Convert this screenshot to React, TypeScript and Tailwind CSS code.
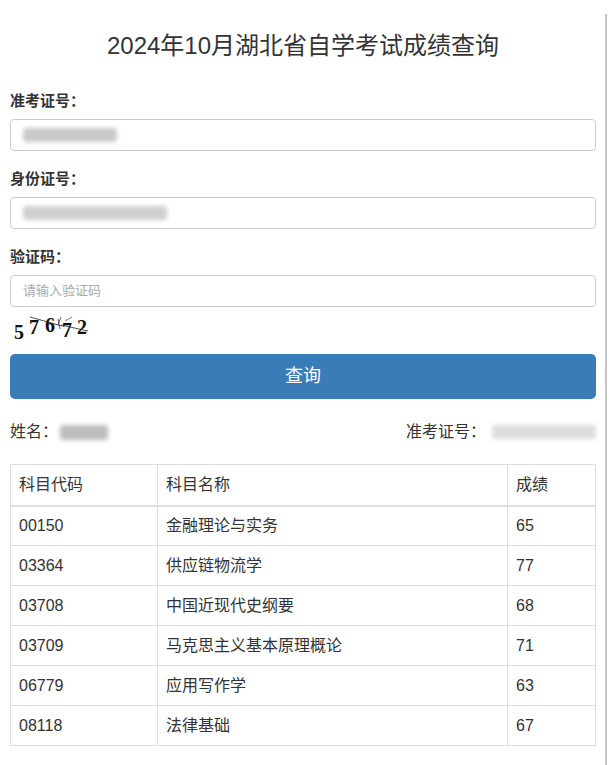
import React from "react";

const font = {
  fontFamily: '"Liberation Sans", "Noto Sans CJK SC", sans-serif',
};

const scores = [
  { code: "00150", name: "金融理论与实务", score: "65" },
  { code: "03364", name: "供应链物流学", score: "77" },
  { code: "03708", name: "中国近现代史纲要", score: "68" },
  { code: "03709", name: "马克思主义基本原理概论", score: "71" },
  { code: "06779", name: "应用写作学", score: "63" },
  { code: "08118", name: "法律基础", score: "67" },
];

// Blurred-out personal data
const Blur = ({ className }: { className: string }) => (
  <div className={`rounded-sm blur-[2px] ${className}`} />
);

const Captcha = () => (
  <svg width="82" height="30" viewBox="0 0 82 30" className="block">
    <g
      fontFamily='"Liberation Serif", serif'
      fontWeight="bold"
      fontSize="20"
      fill="#111"
    >
      <text x="1" y="25">5</text>
      <text x="16" y="20">7</text>
      <text x="32" y="18">6</text>
      <text x="49" y="23">7</text>
      <text x="64" y="20">2</text>
    </g>
    <path d="M17 3 L49 12" stroke="#222" strokeWidth="0.8" fill="none" />
    <path d="M45 5 L47 15 M48 3 L45 11" stroke="#222" strokeWidth="0.7" fill="none" />
    <path d="M52 7 L59 3" stroke="#444" strokeWidth="0.7" fill="none" />
    <path d="M48 11 L75 17" stroke="#222" strokeWidth="0.8" fill="none" />
  </svg>
);

const Field = ({
  label,
  children,
}: {
  label: string;
  children: React.ReactNode;
}) => (
  <div className="flex flex-col gap-[8px]">
    <label className="text-[15px] leading-[20px] font-bold text-[#333]">
      {label}
    </label>
    <div className="h-[32px] rounded-[4px] border border-[#cccccc] bg-white flex items-center px-[12px]">
      {children}
    </div>
  </div>
);

export default function App() {
  return (
    <div className="flex min-h-[765px] bg-white" style={font}>
      <main className="flex-1 pl-[10px] pr-[9px]">
        <h1 className="pt-[31px] text-center text-[24px] leading-[30px] text-[#333]">
          2024年10月湖北省自学考试成绩查询
        </h1>

        <form className="mt-[30px] flex flex-col gap-[18px]">
          <Field label="准考证号：">
            <Blur className="h-[14px] w-[94px] bg-[#c9c9c9]" />
          </Field>
          <Field label="身份证号：">
            <Blur className="h-[14px] w-[144px] bg-[#cfcfcf]" />
          </Field>
          <Field label="验证码：">
            <span className="text-[13px] text-[#aaa]">请输入验证码</span>
          </Field>
        </form>

        <div className="mt-[7px] pl-[3px]">
          <Captcha />
        </div>

        <button className="mt-[10px] h-[45px] w-full rounded-[5px] bg-[#3a7cb8] text-[18px] text-white">
          查询
        </button>

        <div className="mt-[23px] flex items-center text-[16px] leading-[20px] text-[#333]">
          <span>姓名：</span>
          <Blur className="ml-[2px] h-[15px] w-[48px] bg-[#bdbdbd]" />
          <span className="ml-auto mr-[6px]">准考证号：</span>
          <Blur className="h-[14px] w-[104px] bg-[#dcdcdc]" />
        </div>

        <table className="mt-[22px] w-full border-collapse border border-[#dddddd] text-[16px] text-[#333]">
          <thead>
            <tr className="h-[41px] border-b-2 border-[#dddddd]">
              <th className="w-[147px] border border-[#dddddd] px-[8px] text-left font-normal">
                科目代码
              </th>
              <th className="border border-[#dddddd] px-[8px] text-left font-normal">
                科目名称
              </th>
              <th className="w-[88px] border border-[#dddddd] px-[8px] text-left font-normal">
                成绩
              </th>
            </tr>
          </thead>
          <tbody>
            {scores.map((row) => (
              <tr key={row.code} className="h-[40px]">
                <td className="border border-[#dddddd] px-[8px]">{row.code}</td>
                <td className="border border-[#dddddd] px-[8px]">{row.name}</td>
                <td className="border border-[#dddddd] px-[8px]">{row.score}</td>
              </tr>
            ))}
          </tbody>
        </table>
      </main>
      <div className="w-[4px] pt-[14px]">
        <div className="h-full w-[2px] bg-[#c4c4c4]" />
      </div>
    </div>
  );
}
